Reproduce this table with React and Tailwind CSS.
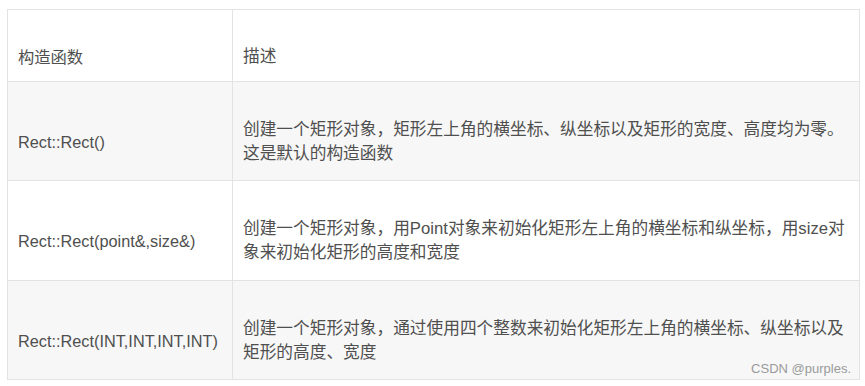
const rows = [
  {
    name: 'Rect::Rect()',
    desc: ['创建一个矩形对象，矩形左上角的横坐标、纵坐标以及矩形的宽度、高度均为零。', '这是默认的构造函数'],
    shaded: true,
  },
  {
    name: 'Rect::Rect(point&,size&)',
    desc: ['创建一个矩形对象，用Point对象来初始化矩形左上角的横坐标和纵坐标，用size对', '象来初始化矩形的高度和宽度'],
    shaded: false,
  },
  {
    name: 'Rect::Rect(INT,INT,INT,INT)',
    desc: ['创建一个矩形对象，通过使用四个整数来初始化矩形左上角的横坐标、纵坐标以及', '矩形的高度、宽度'],
    shaded: true,
  },
];

export default function App() {
  return (
    <div className="relative w-[865px] h-[386px] bg-white font-['Liberation_Sans','Noto_Sans_CJK_SC',sans-serif] text-[#4f4f4f]">
      <div className="absolute left-0 top-0 pl-[7px] pt-[9px]">
        <div className="grid grid-cols-[225px_627px] border-l border-t border-[#e3e3e3] w-[853px]">
          <div className="h-[72px] border-r border-b border-[#e3e3e3] flex items-center pt-[22px] pl-[10px] text-[16.3px] leading-[24px]">
            构造函数
          </div>
          <div className="h-[72px] border-r border-b border-[#e3e3e3] flex items-center pt-[22px] pl-[10px] text-[16.7px] leading-[24px]">
            描述
          </div>
          {rows.map((row, i) => (
            <Row key={i} row={row} tall={i === 1} />
          ))}
        </div>
      </div>
      <div className="absolute right-[14px] top-[359px] text-[13px] text-[#9a9a9a] font-['Liberation_Sans',sans-serif]">
        CSDN @purples.
      </div>
    </div>
  );
}

function Row({ row, tall }) {
  const bg = row.shaded ? 'bg-[#f7f7f7]' : 'bg-white';
  const h = tall ? 'h-[100px]' : 'h-[99px]';
  return (
    <>
      <div className={`${h} ${bg} border-r border-b border-[#e3e3e3] flex items-center pt-[21px] pl-[10px] text-[16.3px] leading-[24px] whitespace-nowrap`}>
        {row.name}
      </div>
      <div className={`${h} ${bg} border-r border-b border-[#e3e3e3] flex flex-col justify-center pt-[21px] pl-[10px] text-[16.7px] leading-[24px]`}>
        {row.desc.map((line, j) => (
          <span key={j} className="block whitespace-nowrap">
            {line}
          </span>
        ))}
      </div>
    </>
  );
}
